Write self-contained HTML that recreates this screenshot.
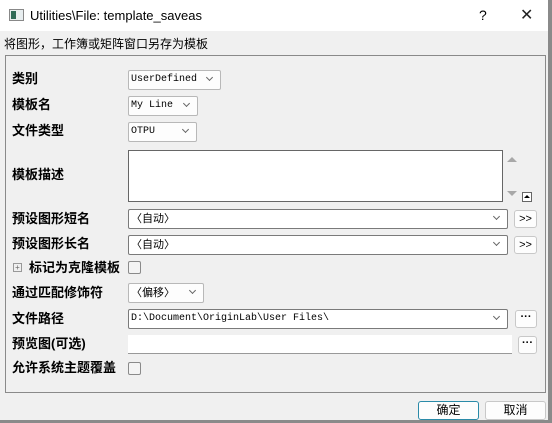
<!DOCTYPE html>
<html><head><meta charset="utf-8"><style>
*{box-sizing:border-box;margin:0;padding:0}
body{width:552px;height:423px;overflow:hidden;background:#f0f0f0;font-family:"Liberation Sans","Noto Sans CJK SC",sans-serif;font-size:12px;color:#000;position:relative}
.a{position:absolute}
.title{left:0;top:0;width:552px;height:31px;background:#fff}
.lbl{font-weight:bold;font-size:13px;left:12px;line-height:16px}
.cb{background:#fff;border:1px solid #7a7a7a;border-radius:2px;font-family:"Liberation Mono","Noto Sans CJK SC",monospace;font-size:10px;line-height:17px;padding-left:2px}
.cb.f{background:#fdfdfd;border-color:#b8b8b8}
.chev{position:absolute;right:8px;top:4px;width:5px;height:5px;border-right:1px solid #666;border-bottom:1px solid #666;transform:rotate(45deg)}
.btn{background:#fdfdfd;border:1px solid #c8c8c8;border-radius:3px;text-align:center;font-size:11px;line-height:16px}
.chk{width:13px;height:13px;border:1px solid #8a8a8a;background:#f4f4f4;border-radius:2px}
</style></head><body>
<div class="a title"></div>
<div class="a" style="left:9px;top:9px;width:15px;height:12px;border:1px solid #888;background:#e8eef0"><div style="width:5px;height:8px;margin:1px;background:#2f6b58"></div></div>
<div class="a" style="left:30px;top:8px;font-size:13px">Utilities\File: template_saveas</div>
<div class="a" style="left:479px;top:7px;font-size:14px">?</div>
<div class="a" style="left:520px;top:5px;font-size:16px;color:#222">✕</div>
<div class="a" style="left:548px;top:0;width:4px;height:423px;background:#8a8a8a"></div>
<div class="a" style="left:0;top:420px;width:552px;height:3px;background:#8a8a8a"></div>
<div class="a" style="left:4px;top:35px;font-size:12px">将图形，工作簿或矩阵窗口另存为模板</div>
<div class="a" style="left:5px;top:55px;width:541px;height:338px;border:1px solid #8a8a8a"></div>

<div class="a lbl" style="top:71px">类别</div>
<div class="a cb f" style="left:128px;top:70px;width:93px;height:20px">UserDefined<span class="chev"></span></div>
<div class="a lbl" style="top:97px">模板名</div>
<div class="a cb f" style="left:128px;top:96px;width:70px;height:20px">My Line<span class="chev"></span></div>
<div class="a lbl" style="top:123px">文件类型</div>
<div class="a cb f" style="left:128px;top:122px;width:69px;height:20px">OTPU<span class="chev"></span></div>
<div class="a lbl" style="top:167px">模板描述</div>
<div class="a" style="left:128px;top:150px;width:375px;height:52px;background:#fff;border:1px solid #666"></div>
<div class="a" style="left:503px;top:150px;width:18px;height:52px;background:#f0f0f0"></div>
<div class="a" style="left:507px;top:157px;border-left:5px solid transparent;border-right:5px solid transparent;border-bottom:5px solid #a8a8a8"></div>
<div class="a" style="left:507px;top:191px;border-left:5px solid transparent;border-right:5px solid transparent;border-top:5px solid #a8a8a8"></div>
<div class="a" style="left:522px;top:192px;width:10px;height:10px;border:1px solid #666;background:#fff"><div style="margin:2px 0 0 1px;border-left:3px solid transparent;border-right:3px solid transparent;border-bottom:3px solid #000;width:0"></div></div>

<div class="a lbl" style="top:211px">预设图形短名</div>
<div class="a cb" style="left:128px;top:209px;width:380px;height:20px;font-family:'Noto Sans CJK SC',sans-serif;font-size:11px">〈自动〉<span class="chev"></span></div>
<div class="a btn" style="left:514px;top:210px;width:23px;height:18px">&gt;&gt;</div>
<div class="a lbl" style="top:236px">预设图形长名</div>
<div class="a cb" style="left:128px;top:235px;width:380px;height:20px;font-family:'Noto Sans CJK SC',sans-serif;font-size:11px">〈自动〉<span class="chev"></span></div>
<div class="a btn" style="left:514px;top:236px;width:23px;height:18px">&gt;&gt;</div>

<div class="a" style="left:13px;top:263px;width:9px;height:9px;border:1px solid #999;font-size:8px;line-height:7px;text-align:center;color:#666">+</div>
<div class="a lbl" style="left:29px;top:260px">标记为克隆模板</div>
<div class="a chk" style="left:128px;top:261px"></div>
<div class="a lbl" style="top:285px">通过匹配修饰符</div>
<div class="a cb f" style="left:128px;top:283px;width:76px;height:20px;font-family:'Noto Sans CJK SC',sans-serif;font-size:11px">〈偏移〉<span class="chev"></span></div>
<div class="a lbl" style="top:311px">文件路径</div>
<div class="a cb" style="left:128px;top:309px;width:380px;height:20px">D:\Document\OriginLab\User Files\<span class="chev"></span></div>
<div class="a btn" style="left:515px;top:310px;width:22px;height:18px;font-weight:bold;line-height:12px">···</div>
<div class="a lbl" style="top:336px">预览图(可选)</div>
<div class="a" style="left:128px;top:335px;width:384px;height:19px;background:#fff;border-bottom:1px solid #999"></div>
<div class="a btn" style="left:518px;top:336px;width:19px;height:18px;font-weight:bold;line-height:12px">···</div>
<div class="a lbl" style="top:360px">允许系统主题覆盖</div>
<div class="a chk" style="left:128px;top:362px"></div>

<div class="a btn" style="left:418px;top:401px;width:61px;height:19px;border:1px solid #2a8aa8;font-size:12px;line-height:17px">确定</div>
<div class="a btn" style="left:485px;top:401px;width:61px;height:19px;font-size:12px;line-height:17px">取消</div>
</body></html>
